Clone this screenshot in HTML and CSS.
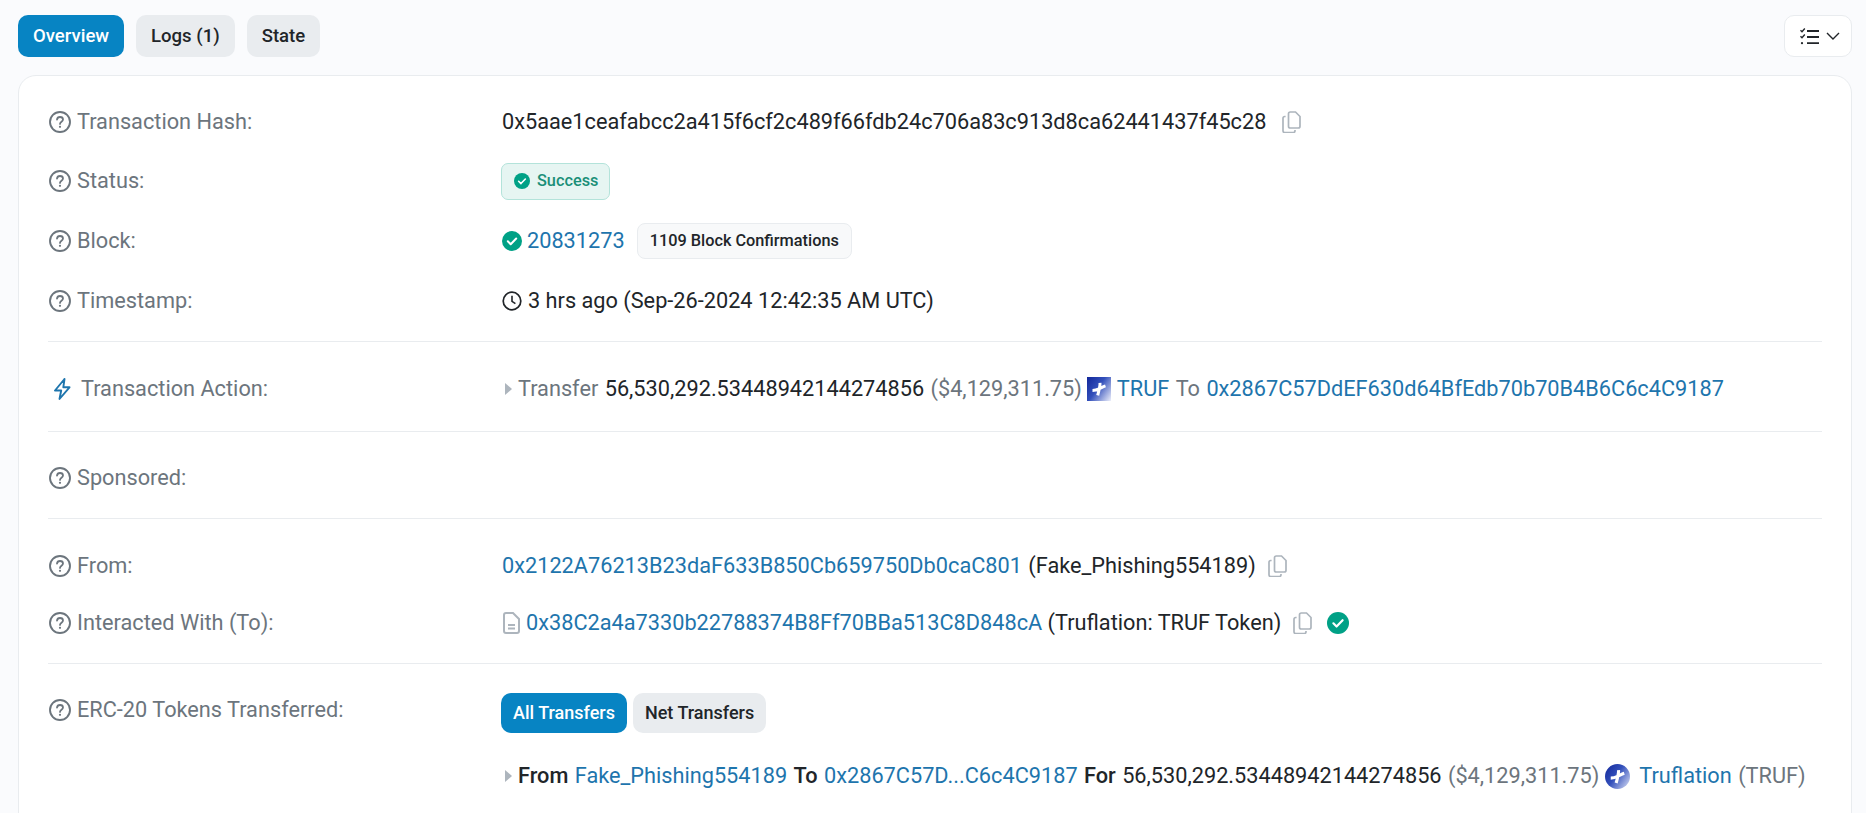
FILE: index.html
```html
<!DOCTYPE html>
<html lang="en">

<head>
    <meta charset="UTF-8">
    <meta name="viewport" content="width=device-width, initial-scale=1.0">
    <title>Transaction Details</title>
    <link rel="stylesheet" href="styles.css">
</head>

<body>
    <!-- icons used more than once -->
    <svg class="sprite" aria-hidden="true">
        <symbol id="i-help" viewBox="0 0 22 22">
            <circle cx="11" cy="11" r="10" fill="none" stroke="currentColor" stroke-width="1.9" />
            <path d="M8 8.600c.2-1.700 1.400-2.600 3-2.600 1.700 0 3 1 3 2.500 0 2.200-3 2.300-3 4.400" fill="none" stroke="currentColor" stroke-width="1.800" stroke-linecap="round" />
            <circle cx="11" cy="15.800" r="1.100" fill="currentColor" />
        </symbol>
        <symbol id="i-copy" viewBox="0 0 19 22">
            <path d="M6.500 2.800c0-1 .8-1.800 1.800-1.800h5.200l4.500 4.500v9.700c0 1-.8 1.800-1.800 1.800H8.300c-1 0-1.800-.8-1.800-1.800z" fill="none" stroke="currentColor" stroke-width="1.700" />
            <path d="M3.600 5.500H2.800C1.800 5.500 1 6.300 1 7.300v12.400c0 1 .8 1.800 1.800 1.800h8.400c1 0 1.800-.8 1.800-1.800v-.8" fill="none" stroke="currentColor" stroke-width="1.700" />
        </symbol>
        <symbol id="i-check" viewBox="0 0 20 20">
            <circle cx="10" cy="10" r="10" fill="currentColor" />
            <path d="M5.800 10.300l2.900 2.900 5.500-5.700" fill="none" stroke="#fff" stroke-width="2" stroke-linecap="round" stroke-linejoin="round" />
        </symbol>
        <symbol id="i-caret" viewBox="0 0 7 12">
            <path d="M0 0l7 6-7 6z" fill="currentColor" />
        </symbol>
        <symbol id="i-truf" viewBox="0 0 24 24">
            <path d="M5.500 13.500c2.500 0 4.500-.6 6.500-1.600 2.300-1.100 4.300-2.300 6.500-3M13 5.800c.2 2-.2 3.500-.6 5.500-.4 2.200-1 4.600-1.700 7" fill="none" stroke="#fff" stroke-width="3" />
        </symbol>
    </svg>

    <div class="page">
        <div class="toolbar">
            <div class="tabs">
                <a class="pill pill-active" href="#">Overview</a>
                <a class="pill" href="#">Logs (1)</a>
                <a class="pill" href="#">State</a>
            </div>
            <button class="filter-btn" type="button">
                <svg class="filter-icon" viewBox="0 0 19 17">
                    <path d="M0.500 2.200l1.500 1.500 2.800-3.200M0.500 8.200l1.500 1.500 2.800-3.200" fill="none" stroke="#212529" stroke-width="1.400" />
                    <path d="M7 3H19M7 9H19M7 15.200H19" fill="none" stroke="#212529" stroke-width="1.800" />
                    <circle cx="2" cy="15.200" r="1.100" fill="#212529" />
                </svg>
                <svg class="chevron" viewBox="0 0 14 8">
                    <path d="M1 1l6 6 6-6" fill="none" stroke="#212529" stroke-width="1.400" />
                </svg>
            </button>
        </div>

        <div class="card">
            <!-- basic info -->
            <div class="section section-basic">
                <div class="row">
                    <div class="label"><svg class="icon-help"><use href="#i-help" /></svg>Transaction Hash:</div>
                    <div class="value">0x5aae1ceafabcc2a415f6cf2c489f66fdb24c706a83c913d8ca62441437f45c28<svg class="icon-copy copy-wide"><use href="#i-copy" /></svg></div>
                </div>
                <div class="row">
                    <div class="label"><svg class="icon-help"><use href="#i-help" /></svg>Status:</div>
                    <div class="value">
                        <span class="badge-success"><svg class="icon-check-sm"><use href="#i-check" /></svg>Success</span>
                    </div>
                </div>
                <div class="row">
                    <div class="label"><svg class="icon-help"><use href="#i-help" /></svg>Block:</div>
                    <div class="value">
                        <svg class="icon-check"><use href="#i-check" /></svg>
                        <a class="link" href="#">20831273</a>
                        <span class="badge-block">1109 Block Confirmations</span>
                    </div>
                </div>
                <div class="row">
                    <div class="label"><svg class="icon-help"><use href="#i-help" /></svg>Timestamp:</div>
                    <div class="value">
                        <svg class="icon-clock" viewBox="0 0 20 20">
                            <circle cx="10" cy="10" r="8.800" fill="none" stroke="#212529" stroke-width="1.700" />
                            <path d="M10 4.800V10.400l3.400 2.200" fill="none" stroke="#212529" stroke-width="1.600" />
                        </svg>
                        3 hrs ago (Sep-26-2024 12:42:35 AM UTC)
                    </div>
                </div>
            </div>

            <!-- action -->
            <div class="section section-action">
                <div class="row">
                    <div class="label label-action">
                        <svg class="icon-bolt" viewBox="0 0 18 22">
                            <path d="M11.500 1L2 12.500h6.200L6.500 21 16.500 9.300H10.300z" fill="none" stroke="#1e75ad" stroke-width="1.900" stroke-linejoin="round" />
                        </svg>
                        Transaction Action:
                    </div>
                    <div class="value value-wide">
                        <svg class="icon-caret"><use href="#i-caret" /></svg>
                        <span class="muted">Transfer</span>&nbsp;56,530,292.53448942144274856&nbsp;<span class="muted">($4,129,311.75)</span>
                        <span class="logo logo-square"><svg><use href="#i-truf" /></svg></span>
                        <a class="link" href="#">TRUF</a>&nbsp;<span class="muted">To</span>&nbsp;<a class="link" href="#">0x2867C57DdEF630d64BfEdb70b70B4B6C6c4C9187</a>
                    </div>
                </div>
            </div>

            <!-- sponsored -->
            <div class="section section-sponsored">
                <div class="row">
                    <div class="label"><svg class="icon-help"><use href="#i-help" /></svg>Sponsored:</div>
                </div>
            </div>

            <!-- addresses -->
            <div class="section section-address">
                <div class="row row-address">
                    <div class="label"><svg class="icon-help"><use href="#i-help" /></svg>From:</div>
                    <div class="value value-wide">
                        <a class="link" href="#">0x2122A76213B23daF633B850Cb659750Db0caC801</a>&nbsp;(Fake_Phishing554189)<svg class="icon-copy"><use href="#i-copy" /></svg>
                    </div>
                </div>
                <div class="row row-address">
                    <div class="label"><svg class="icon-help"><use href="#i-help" /></svg>Interacted With (To):</div>
                    <div class="value">
                        <svg class="icon-doc" viewBox="0 0 17 22">
                            <path d="M1 3c0-1.100.9-2 2-2h7l6 6v12c0 1.100-.9 2-2 2H3c-1.100 0-2-.9-2-2z" fill="none" stroke="#adb5bd" stroke-width="2" />
                            <path d="M5 13h7M5 16.500h7" stroke="#adb5bd" stroke-width="1.800" />
                        </svg>
                        <a class="link" href="#">0x38C2a4a7330b22788374B8Ff70BBa513C8D848cA</a>&nbsp;(Truflation: TRUF Token)<svg class="icon-copy"><use href="#i-copy" /></svg>
                        <svg class="icon-verified"><use href="#i-check" /></svg>
                    </div>
                </div>
            </div>

            <!-- token transfers -->
            <div class="section-tokens">
                <div class="label label-top"><svg class="icon-help"><use href="#i-help" /></svg>ERC-20 Tokens Transferred:</div>
                <div class="tokens-body">
                    <div class="transfer-tabs">
                        <a class="pill pill-sm pill-active" href="#">All Transfers</a>
                        <a class="pill pill-sm" href="#">Net Transfers</a>
                    </div>
                    <div class="value value-wide">
                        <svg class="icon-caret"><use href="#i-caret" /></svg>
                        <b>From</b>&nbsp;<a class="link" href="#">Fake_Phishing554189</a>&nbsp;<b>To</b>&nbsp;<a class="link" href="#">0x2867C57D...C6c4C9187</a>&nbsp;<b>For</b>&nbsp;56,530,292.53448942144274856&nbsp;<span class="muted">($4,129,311.75)</span>
                        <span class="logo logo-round"><svg><use href="#i-truf" /></svg></span>
                        <a class="link" href="#">Truflation</a>&nbsp;<span class="muted">(TRUF)</span>
                    </div>
                </div>
            </div>
        </div>
    </div>
</body>

</html>
```

FILE: styles.css
```css
* {
    margin: 0;
    padding: 0;
    box-sizing: border-box;
}

html,
body {
    height: 100%;
    overflow: hidden;
}

body {
    background: #fafbfd;
    color: #212529;
    font-family: Roboto, "Liberation Sans", sans-serif;
    font-size: 21.720px;
    line-height: 28px;
}

a {
    text-decoration: none;
}

.sprite {
    display: none;
}

.page {
    padding: 15px 14px 0 18px;
}

/* top tabs */
.toolbar {
    display: flex;
    justify-content: space-between;
    margin-bottom: 18px;
}

.tabs {
    display: flex;
    gap: 12px;
}

.pill {
    display: flex;
    align-items: center;
    height: 42px;
    padding: 0 15px;
    border-radius: 10px;
    background: #e9ecef;
    color: #212529;
    font-size: 18.550px;
    font-weight: 500;
}

.pill-active {
    background: #0784c3;
    color: #fff;
}

.pill-sm {
    height: 40px;
    padding: 0 12px;
    font-size: 18px;
}

.filter-btn {
    display: flex;
    align-items: center;
    gap: 7px;
    width: 68px;
    height: 42px;
    padding-left: 15px;
    background: #fff;
    border: 1px solid #e9ecef;
    border-radius: 10px;
}

.filter-icon {
    width: 19px;
    height: 17px;
}

.chevron {
    width: 14px;
    height: 8px;
}

/* main card */
.card {
    height: 800px;
    padding: 0 29px;
    background: #fff;
    border: 1px solid #e9ecef;
    border-radius: 18px;
}

.section {
    border-bottom: 1px solid #e9ecef;
}

.section-basic {
    padding: 16px 0 11px;
}

.section-basic .row {
    height: 59.600px;
}

.section-action {
    padding: 17px 0 12px;
}

.section-action .row {
    height: 60px;
}

.section-sponsored {
    padding: 16px 0 10px;
}

.section-sponsored .row {
    height: 60px;
}

.section-address {
    padding: 18px 0 12px;
}

.row {
    display: grid;
    grid-template-columns: 454px 1fr;
    align-items: center;
}

.row-address {
    height: 57px;
}

.label {
    display: flex;
    align-items: center;
    color: #6c757d;
}

.value {
    display: flex;
    align-items: center;
    white-space: nowrap;
}

/* spaces in these rows are a little wider */
.value-wide {
    word-spacing: 1px;
}

.link {
    color: #1e75ad;
}

.muted {
    color: #6c757d;
}

b {
    font-weight: 500;
}

/* icons */
.icon-help {
    width: 22px;
    height: 22px;
    margin: 0 6px 0 1px;
    color: #6c757d;
}

.icon-bolt {
    width: 18px;
    height: 22px;
    margin: 0 10px 0 5px;
}

.icon-copy {
    width: 19px;
    height: 22px;
    margin-left: 12px;
    color: #adb5bd;
}

.copy-wide {
    margin-left: 16px;
}

.icon-check {
    width: 20px;
    height: 20px;
    margin-right: 5px;
    color: #00a186;
}

.icon-check-sm {
    width: 16px;
    height: 16px;
    margin-right: 7px;
    color: #00a186;
}

.icon-clock {
    width: 20px;
    height: 20px;
    margin-right: 6px;
}

.icon-caret {
    width: 7px;
    height: 12px;
    margin: 0 6px 0 3px;
    color: #adb5bd;
}

.icon-doc {
    width: 17px;
    height: 22px;
    margin: 0 6px 0 1px;
}

.icon-verified {
    width: 22px;
    height: 22px;
    margin-left: 15px;
    color: #00a186;
}

/* badges */
.badge-success {
    display: flex;
    align-items: center;
    height: 37px;
    margin-left: -1px;
    padding: 0 11px 0 12px;
    background: #e6f5f2;
    border: 1px solid #b3e3da;
    border-radius: 7px;
    color: #1a8f78;
    font-size: 16.300px;
    font-weight: 500;
}

.badge-block {
    display: flex;
    align-items: center;
    height: 36px;
    margin-left: 12px;
    padding: 0 12px;
    background: #f8f9fa;
    border: 1px solid #e9ecef;
    border-radius: 8px;
    font-size: 16.300px;
    font-weight: 500;
}

/* token logos */
.logo {
    display: block;
    flex-shrink: 0;
    width: 24px;
    height: 24px;
    margin: 0 6px;
}

.logo svg {
    display: block;
    width: 100%;
    height: 100%;
}

.logo-square {
    margin-left: 5px;
    background: linear-gradient(125deg, #12279a 0%, #3350bb 45%, #eef0fb 100%);
}

.logo-round {
    width: 25px;
    height: 25px;
    margin-right: 9px;
    background: linear-gradient(125deg, #12279a 0%, #3350bb 45%, #dfe4f7 100%);
    border-radius: 50%;
}

/* token transfers */
.section-tokens {
    display: grid;
    grid-template-columns: 454px 1fr;
    padding-top: 29px;
}

.label-top {
    height: 28px;
    margin-top: 3px;
}

.tokens-body {
    display: flex;
    flex-direction: column;
    gap: 29px;
}

.transfer-tabs {
    display: flex;
    gap: 6px;
    margin-left: -1px;
}
```
